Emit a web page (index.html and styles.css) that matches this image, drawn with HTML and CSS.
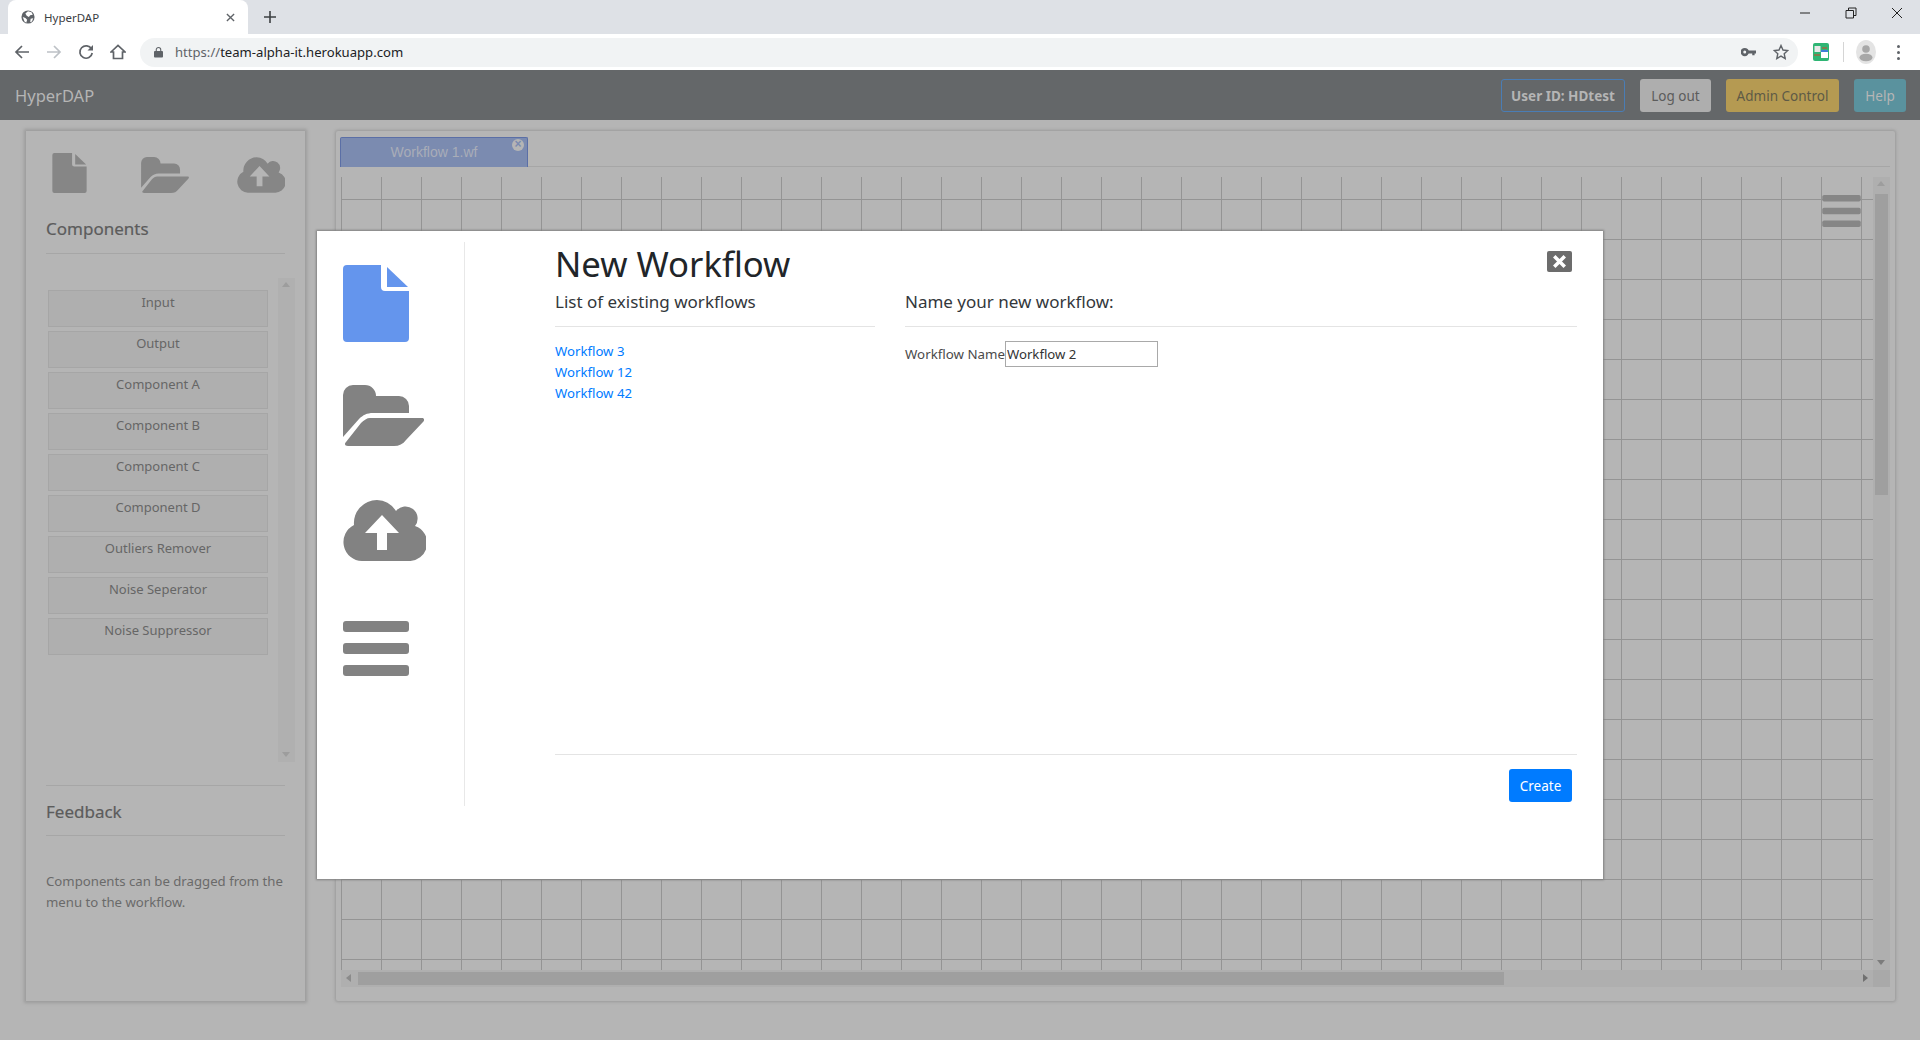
FILE: index.html
```html
<!DOCTYPE html>
<html lang="en">
<head>
    <meta charset="UTF-8">
    <title>HyperDAP</title>
    <link rel="stylesheet" href="styles.css">
</head>
<body>

    <svg class="icon-defs" width="0" height="0">
        <symbol id="i-file" viewBox="0 0 66 77">
            <path d="M4 0H38V22a4 4 0 0 0 4 4H66V73a4 4 0 0 1-4 4H4a4 4 0 0 1-4-4V4a4 4 0 0 1 4-4Z"/>
            <path d="M44 2L65 22H44Z"/>
        </symbol>
        <symbol id="i-folder" viewBox="0 0 81 61">
            <path d="M0 52V10A10 10 0 0 1 10 0H22A11 11 0 0 1 33 11H56A10 10 0 0 1 66 21V28H30C24 28 20 30 16 34Z"/>
            <path d="M27 33H79C81 33 82 35 80 37L63 55C60 59 56 61 51 61H5C2 61 1 59 3 57L18 38C21 35 24 33 27 33Z"/>
        </symbol>
        <symbol id="i-cloud" viewBox="0 0 83 61">
            <path d="M19 61A19 19 0 0 1 11 25A23 23 0 0 1 34 0A24 24 0 0 1 53 11A11 11 0 0 1 72 26A18 18 0 0 1 65 61Z"/>
            <path class="cut" d="M39 15L56 33H44V50H34V33H22Z"/>
        </symbol>
        <symbol id="i-bars" viewBox="0 0 66 55">
            <rect width="66" height="11" rx="3"/>
            <rect y="22" width="66" height="11" rx="3"/>
            <rect y="44" width="66" height="11" rx="3"/>
        </symbol>
    </svg>

    <!-- browser window -->
    <div class="tabstrip">
        <div class="browser-tab">
            <svg class="favicon" viewBox="0 0 16 16">
                <circle cx="8" cy="8" r="7.5" fill="#5f6368"/>
                <path d="M8 1.5l4 1 1.5 3-3 .5-1.500 2-2.500-1.500L5 4ZM2 8l3 1 2 2-1 3.500-2-1.500ZM11 10l3-.5-1.500 3.500-2 1Z" fill="#fff"/>
            </svg>
            <span class="browser-tab-title">HyperDAP</span>
            <svg class="tab-x" viewBox="0 0 10 10"><path d="M1 1L9 9M9 1L1 9"/></svg>
        </div>
        <svg class="tab-plus" viewBox="0 0 12 12"><path d="M6 0V12M0 6H12"/></svg>
        <div class="window-controls">
            <svg viewBox="0 0 12 12"><path d="M1 6H11"/></svg>
            <svg viewBox="0 0 12 12"><path d="M1 3.500H8.500V11H1ZM3.500 3.500V1H11V8.500H8.500"/></svg>
            <svg viewBox="0 0 12 12"><path d="M1 1L11 11M11 1L1 11"/></svg>
        </div>
    </div>
    <div class="toolbar">
        <svg class="tool" viewBox="0 0 16 16"><path d="M15 8H2M8 2L2 8l6 6"/></svg>
        <svg class="tool tool-off" viewBox="0 0 16 16"><path d="M1 8H14M8 2l6 6-6 6"/></svg>
        <svg class="tool" viewBox="0 0 16 16"><path d="M13.500 5A6.200 6.200 0 1 0 14.200 9"/><path class="tool-fill" d="M15 1V6.500H9.500Z"/></svg>
        <svg class="tool" viewBox="0 0 16 16"><path d="M1 8L8 1.500 15 8H12.500V14.500H3.500V8Z"/></svg>
        <div class="omnibox">
            <svg class="lock" viewBox="0 0 10 12"><path d="M2.500 5V3.500a2.500 2.500 0 0 1 5 0V5" fill="none" stroke="#5f6368" stroke-width="1.200"/><rect y="5" width="10" height="7" rx="1" fill="#5f6368"/></svg>
            <span class="url"><span class="url-scheme">https://</span>team-alpha-it.herokuapp.com</span>
            <svg class="key" viewBox="0 0 16 10"><circle cx="4" cy="5" r="3" fill="none" stroke="#5f6368" stroke-width="2.800"/><path d="M6 3.300H16V6.500H14.500V8.500H12V6.500H6Z" fill="#5f6368"/></svg>
            <svg class="star" viewBox="0 0 16 16"><path d="M8 1.500l2 4.500 4.800.5-3.600 3.200 1 4.800L8 12.100l-4.200 2.400 1-4.800L1.200 6.500 6 6Z"/></svg>
        </div>
        <svg class="extension" viewBox="0 0 16 18">
            <rect width="16" height="18" rx="2" fill="#2fb574"/>
            <rect x="1.500" y="3" width="6" height="6" fill="#e8e8e8"/>
            <rect x="8" y="9" width="7" height="6" fill="#fff"/>
            <rect x="8" y="7" width="7" height="2" fill="#3f7fd8"/>
            <path d="M9 5H14M1 12H7" stroke="#d8402a" stroke-width="1"/>
        </svg>
        <div class="toolbar-sep"></div>
        <div class="avatar">
            <svg viewBox="0 0 20 24"><circle cx="10" cy="9" r="3.800" fill="#a8a8a8"/><ellipse cx="10" cy="17.500" rx="6.500" ry="3.800" fill="#a8a8a8"/></svg>
        </div>
        <div class="menu-dots"><i></i><i></i><i></i></div>
    </div>

    <!-- app navbar -->
    <nav class="navbar">
        <span class="brand">HyperDAP</span>
        <div class="nav-buttons">
            <span class="btn btn-user">User ID: HDtest</span>
            <span class="btn btn-logout">Log out</span>
            <span class="btn btn-admin">Admin Control</span>
            <span class="btn btn-help">Help</span>
        </div>
    </nav>

    <main class="page">
        <aside class="sidebar">
            <div class="side-icons">
                <svg class="side-file"><use href="#i-file"/></svg>
                <svg class="side-folder"><use href="#i-folder"/></svg>
                <svg class="side-cloud"><use href="#i-cloud"/></svg>
            </div>
            <h5 class="side-title">Components</h5>
            <div class="component-scroll">
                <div class="component-list">
                    <div class="component">Input</div>
                    <div class="component">Output</div>
                    <div class="component">Component A</div>
                    <div class="component">Component B</div>
                    <div class="component">Component C</div>
                    <div class="component">Component D</div>
                    <div class="component">Outliers Remover</div>
                    <div class="component">Noise Seperator</div>
                    <div class="component">Noise Suppressor</div>
                </div>
                <div class="vscroll-track">
                    <span class="arrow arrow-up"></span>
                    <span class="arrow arrow-down"></span>
                </div>
            </div>
            <h5 class="side-title side-feedback">Feedback</h5>
            <p class="feedback-text">Components can be dragged from the menu to the workflow.</p>
        </aside>

        <section class="workspace">
            <div class="tabs">
                <div class="wf-tab">
                    Workflow 1.wf
                    <span class="wf-tab-close">×</span>
                </div>
            </div>
            <div class="canvas-wrap">
                <div class="canvas-row">
                    <div class="canvas">
                        <svg class="canvas-menu"><use href="#i-bars"/></svg>
                    </div>
                    <div class="canvas-vbar">
                        <span class="arrow arrow-up"></span>
                        <div class="canvas-vthumb"></div>
                        <span class="arrow arrow-down"></span>
                    </div>
                </div>
                <div class="canvas-hbar">
                    <span class="arrow arrow-left"></span>
                    <div class="canvas-hthumb"></div>
                    <span class="arrow arrow-right"></span>
                    <div class="scroll-corner"></div>
                </div>
            </div>
        </section>
    </main>

    <!-- new workflow dialog -->
    <div class="modal">
        <div class="modal-icons">
            <svg class="modal-file"><use href="#i-file"/></svg>
            <svg class="modal-folder"><use href="#i-folder"/></svg>
            <svg class="modal-cloud"><use href="#i-cloud"/></svg>
            <svg class="modal-bars"><use href="#i-bars"/></svg>
        </div>
        <div class="modal-body">
            <div class="modal-title-row">
                <h1 class="modal-title">New Workflow</h1>
                <span class="modal-close">
                    <svg viewBox="0 0 12 12"><path d="M3 3L9 9M9 3L3 9"/></svg>
                </span>
            </div>
            <div class="modal-columns">
                <div class="col-list">
                    <h5 class="col-title">List of existing workflows</h5>
                    <a class="wf-link" href="#">Workflow 3</a>
                    <a class="wf-link" href="#">Workflow 12</a>
                    <a class="wf-link" href="#">Workflow 42</a>
                </div>
                <div class="col-form">
                    <h5 class="col-title">Name your new workflow:</h5>
                    <label class="wf-label" for="wfName">Workflow Name</label><input class="wf-input" id="wfName" type="text" value="Workflow 2">
                </div>
            </div>
            <div class="modal-footer">
                <button class="btn-create">Create</button>
            </div>
        </div>
    </div>

</body>
</html>
```

FILE: styles.css
```css
* {
    box-sizing: border-box;
}
html, body {
    margin: 0;
    height: 1040px;
    overflow: hidden;
}
body {
    font-family: "Noto Sans", "Open Sans", sans-serif;
    font-size: 13px;
    line-height: 21px;
    background-color: #b5b5b5;
    color: #5c5c5c;
}
.icon-defs {
    position: absolute;
}
h1, h5, p {
    margin: 0;
    font-weight: 400;
}
.cut {
    fill: var(--cut-color);
}

/* browser window */
.tabstrip {
    display: flex;
    align-items: flex-end;
    height: 34px;
    background-color: #dee1e6;
}
.browser-tab {
    display: flex;
    align-items: center;
    width: 240px;
    height: 34px;
    margin-left: 8px;
    padding: 0 13px;
    background-color: #fff;
    border-radius: 8px 8px 0 0;
}
.favicon {
    width: 14px;
    height: 14px;
    margin-right: 9px;
}
.browser-tab-title {
    flex: 1;
    font-size: 11.5px;
    color: #3c4043;
}
.tab-x {
    width: 9px;
    height: 9px;
    fill: none;
    stroke: #5f6368;
    stroke-width: 1.5;
}
.tab-plus {
    width: 12px;
    height: 12px;
    margin: 0 0 11px 16px;
    fill: none;
    stroke: #3c4043;
    stroke-width: 1.6;
}
.window-controls {
    display: flex;
    gap: 34px;
    margin-left: auto;
    padding: 0 17px 15px 0;
}
.window-controls svg {
    width: 12px;
    height: 12px;
    fill: none;
    stroke: #222;
    stroke-width: 1;
}
.toolbar {
    display: flex;
    align-items: center;
    height: 36px;
    padding-left: 14px;
    background-color: #fff;
}
.tool {
    width: 16px;
    height: 16px;
    margin-right: 16px;
    fill: none;
    stroke: #5f6368;
    stroke-width: 1.7;
}
.tool-off {
    stroke: #bdc1c6;
}
.tool-fill {
    fill: #5f6368;
    stroke: none;
}
.omnibox {
    display: flex;
    align-items: center;
    flex: 1;
    height: 29px;
    margin-left: -2px;
    padding: 0 9px 0 14px;
    background-color: #f1f3f4;
    border-radius: 15px;
}
.lock {
    width: 9px;
    height: 12px;
    margin-right: 12px;
}
.url {
    flex: 1;
    font-size: 13.1px;
    color: #202124;
}
.url-scheme {
    color: #5f6368;
}
.key {
    width: 15px;
    height: 10px;
    margin-right: 17px;
}
.star {
    width: 16px;
    height: 16px;
    fill: none;
    stroke: #5f6368;
    stroke-width: 1.4;
}
.extension {
    width: 16px;
    height: 18px;
    margin-left: 15px;
}
.toolbar-sep {
    width: 1px;
    height: 20px;
    margin: 0 12px 0 14px;
    background-color: #d5d5d5;
}
.avatar {
    width: 20px;
    height: 24px;
    background-color: #e4e4e4;
    border-radius: 50%;
}
.avatar svg {
    display: block;
    width: 20px;
    height: 24px;
}
.menu-dots {
    display: flex;
    flex-direction: column;
    gap: 3px;
    margin: 0 20px 0 21px;
}
.menu-dots i {
    width: 3px;
    height: 3px;
    background-color: #5f6368;
    border-radius: 50%;
}

/* app navbar */
.navbar {
    display: flex;
    align-items: center;
    justify-content: space-between;
    height: 50px;
    padding: 0 14px 0 15px;
    background-color: #646769;
}
.brand {
    font-size: 16.5px;
    color: #b5b5b5;
}
.nav-buttons {
    display: flex;
    gap: 15px;
    margin-top: 1px;
}
.btn {
    display: flex;
    align-items: center;
    justify-content: center;
    height: 33px;
    padding-top: 1px;
    font-size: 13.5px;
    border-radius: 3px;
}
.btn-user {
    width: 124px;
    font-weight: 700;
    color: #b5b5b5;
    border: 1px solid #4a7db5;
}
.btn-logout {
    width: 71px;
    color: #5c5c5c;
    background-color: #aeaeae;
}
.btn-admin {
    width: 113px;
    color: #5e5a46;
    background-color: #b59a52;
}
.btn-help {
    width: 52px;
    color: #b5b5b5;
    background-color: #5a929e;
}

/* page behind the dialog */
.page {
    display: flex;
    height: 920px;
    padding: 11px 26px 39px 26px;
    gap: 31px;
}
.sidebar {
    flex: none;
    width: 279px;
    padding: 22px 20px 0 20px;
    box-shadow: 0 0 3px 2px #9c9c9c;
}
.side-icons {
    display: flex;
    justify-content: space-between;
    align-items: flex-end;
    height: 40px;
    padding: 0 0 0 6px;
    --cut-color: #b5b5b5;
}
.side-icons svg {
    fill: #868686;
}
.side-file {
    width: 35px;
    height: 40px;
}
.side-folder {
    width: 48px;
    height: 36px;
    margin-left: 6px;
}
.side-cloud {
    width: 48px;
    height: 36px;
}
.side-title {
    height: 37px;
    margin-top: 24px;
    font-size: 17px;
    line-height: 24px;
    -webkit-text-stroke: 0.2px #5c5c5c;
    color: #5c5c5c;
    border-bottom: 1px solid #a6a6a6;
}
.component-scroll {
    display: flex;
    justify-content: space-between;
    height: 484px;
    margin: 24px -10px 0 0;
}
.component-list {
    display: flex;
    flex-direction: column;
    gap: 4px;
    width: 220px;
    margin: 12px 0 0 2px;
}
.component {
    height: 37px;
    padding-top: 1px;
    text-align: center;
    color: #666;
    background-color: #afafaf;
    border: 1px solid #a6a6a6;
}
.vscroll-track {
    position: relative;
    width: 17px;
    background-color: #b0b0b0;
}
.arrow {
    position: absolute;
    width: 0;
    height: 0;
    border: 4px solid transparent;
}
.arrow-up {
    top: 4px;
    left: 4px;
    border-top: 0;
    border-bottom: 5px solid #9d9d9d;
}
.arrow-down {
    bottom: 5px;
    left: 4px;
    border-bottom: 0;
    border-top: 5px solid #9d9d9d;
}
.arrow-left {
    top: 4px;
    left: 5px;
    border-left: 0;
    border-right: 5px solid #8b8b8b;
}
.arrow-right {
    top: 4px;
    right: 22px;
    border-right: 0;
    border-left: 5px solid #707070;
}
.canvas-vbar .arrow-down {
    border-top-color: #7c7c7c;
}
.side-feedback {
    height: 51px;
    margin-top: 23px;
    padding-top: 14px;
    border-top: 1px solid #a6a6a6;
}
.feedback-text {
    margin-top: 35px;
    font-size: 13.2px;
    color: #6a6a6a;
}

/* workflow area */
.workspace {
    flex: none;
    width: 1559px;
    padding: 6px 5px 0 4px;
    border-radius: 2px;
    box-shadow: 0 0 3px 1px #999;
}
.tabs {
    height: 30px;
    border-bottom: 1px solid #a6a6a6;
}
.wf-tab {
    position: relative;
    width: 188px;
    height: 30px;
    font-family: "Liberation Sans", Arial, sans-serif;
    font-size: 14px;
    line-height: 28px;
    text-align: center;
    color: #a9adb8;
    background-color: #7b8bb0;
    border: 1px solid #5b6fa6;
    border-bottom: 0;
    border-radius: 2px 2px 0 0;
}
.wf-tab-close {
    position: absolute;
    top: 1px;
    right: 3px;
    width: 12px;
    height: 12px;
    font-size: 12px;
    font-weight: 700;
    line-height: 11px;
    color: #7b8bb0;
    background-color: #b5b5b5;
    border-radius: 50%;
}
.canvas-wrap {
    margin: 10px 0 0 1px;
}
.canvas-row {
    display: flex;
    height: 793px;
}
.canvas {
    position: relative;
    flex: 1;
    background-color: #b5b5b5;
    background-image:
        linear-gradient(to right, #949494 1px, transparent 1px),
        linear-gradient(to bottom, #949494 1px, transparent 1px);
    background-size: 40px 40px;
    background-position: 0 22px;
}
.canvas-menu {
    position: absolute;
    top: 18px;
    right: 12px;
    width: 39px;
    height: 32px;
    fill: #868686;
}
.canvas-vbar {
    position: relative;
    width: 17px;
    background-color: #afafaf;
}
.canvas-vthumb {
    width: 13px;
    height: 301px;
    margin: 17px 0 0 2px;
    background-color: #9f9f9f;
}
.canvas-hbar {
    position: relative;
    display: flex;
    height: 17px;
    padding: 2px 0 0 17px;
    background-color: #afafaf;
}
.canvas-hthumb {
    width: 1146px;
    height: 13px;
    background-color: #9f9f9f;
}
.scroll-corner {
    position: absolute;
    top: 0;
    right: 0;
    width: 17px;
    height: 17px;
    background-color: #a9a9a9;
}

/* dialog */
.modal {
    position: absolute;
    top: 231px;
    left: 317px;
    display: flex;
    width: 1286px;
    height: 648px;
    padding: 11px 26px 0 26px;
    background-color: #fff;
    box-shadow: 0 0 2px 1px #808080;
    --cut-color: #fff;
}
.modal-icons {
    display: flex;
    flex-direction: column;
    flex: none;
    width: 122px;
    height: 564px;
    padding-top: 23px;
    border-right: 1px solid #e8e8e8;
}
.modal-icons svg {
    display: block;
    flex: none;
    fill: #828282;
}
.modal-icons .modal-file {
    width: 66px;
    height: 77px;
    fill: #6495ed;
}
.modal-folder {
    width: 81px;
    height: 61px;
    margin-top: 43px;
}
.modal-cloud {
    width: 83px;
    height: 61px;
    margin-top: 54px;
}
.modal-bars {
    width: 66px;
    height: 55px;
    margin-top: 60px;
}
.modal-body {
    display: flex;
    flex-direction: column;
    flex: 1;
    margin-left: 90px;
}
.modal-title-row {
    display: flex;
    justify-content: space-between;
    height: 42px;
}
.modal-title {
    margin-top: 1px;
    font-size: 34.7px;
    line-height: 42px;
    color: #212529;
}
.modal-close {
    width: 25px;
    height: 21px;
    margin: 9px 5px 0 0;
    background-color: #6c6c6c;
    border-radius: 2px;
}
.modal-close svg {
    display: block;
    width: 25px;
    height: 21px;
    fill: none;
    stroke: #fff;
    stroke-width: 2;
}
.modal-columns {
    display: flex;
    gap: 30px;
    height: 467px;
    margin-top: 4px;
    border-bottom: 1px solid #e4e4e4;
}
.col-list {
    width: 320px;
}
.col-form {
    flex: 1;
}
.col-title {
    height: 39px;
    margin-bottom: 14px;
    padding-top: 2px;
    font-size: 17px;
    line-height: 24px;
    color: #33373b;
    border-bottom: 1px solid #e4e4e4;
}
.wf-link {
    display: block;
    font-size: 13.2px;
    color: #007bff;
    text-decoration: none;
}
.wf-label {
    font-size: 13.3px;
    color: #4a4a4a;
}
.wf-input {
    width: 153px;
    height: 26px;
    padding: 0 1px;
    font-family: inherit;
    font-size: 13.2px;
    color: #333;
    border: 1px solid #a9a9a9;
    border-radius: 0;
    outline: none;
}
.modal-footer {
    display: flex;
    justify-content: flex-end;
    padding: 14px 5px 0 0;
}
.btn-create {
    width: 63px;
    height: 33px;
    font-family: inherit;
    font-size: 13.5px;
    color: #fff;
    background-color: #007bff;
    border: none;
    border-radius: 3px;
}
```
